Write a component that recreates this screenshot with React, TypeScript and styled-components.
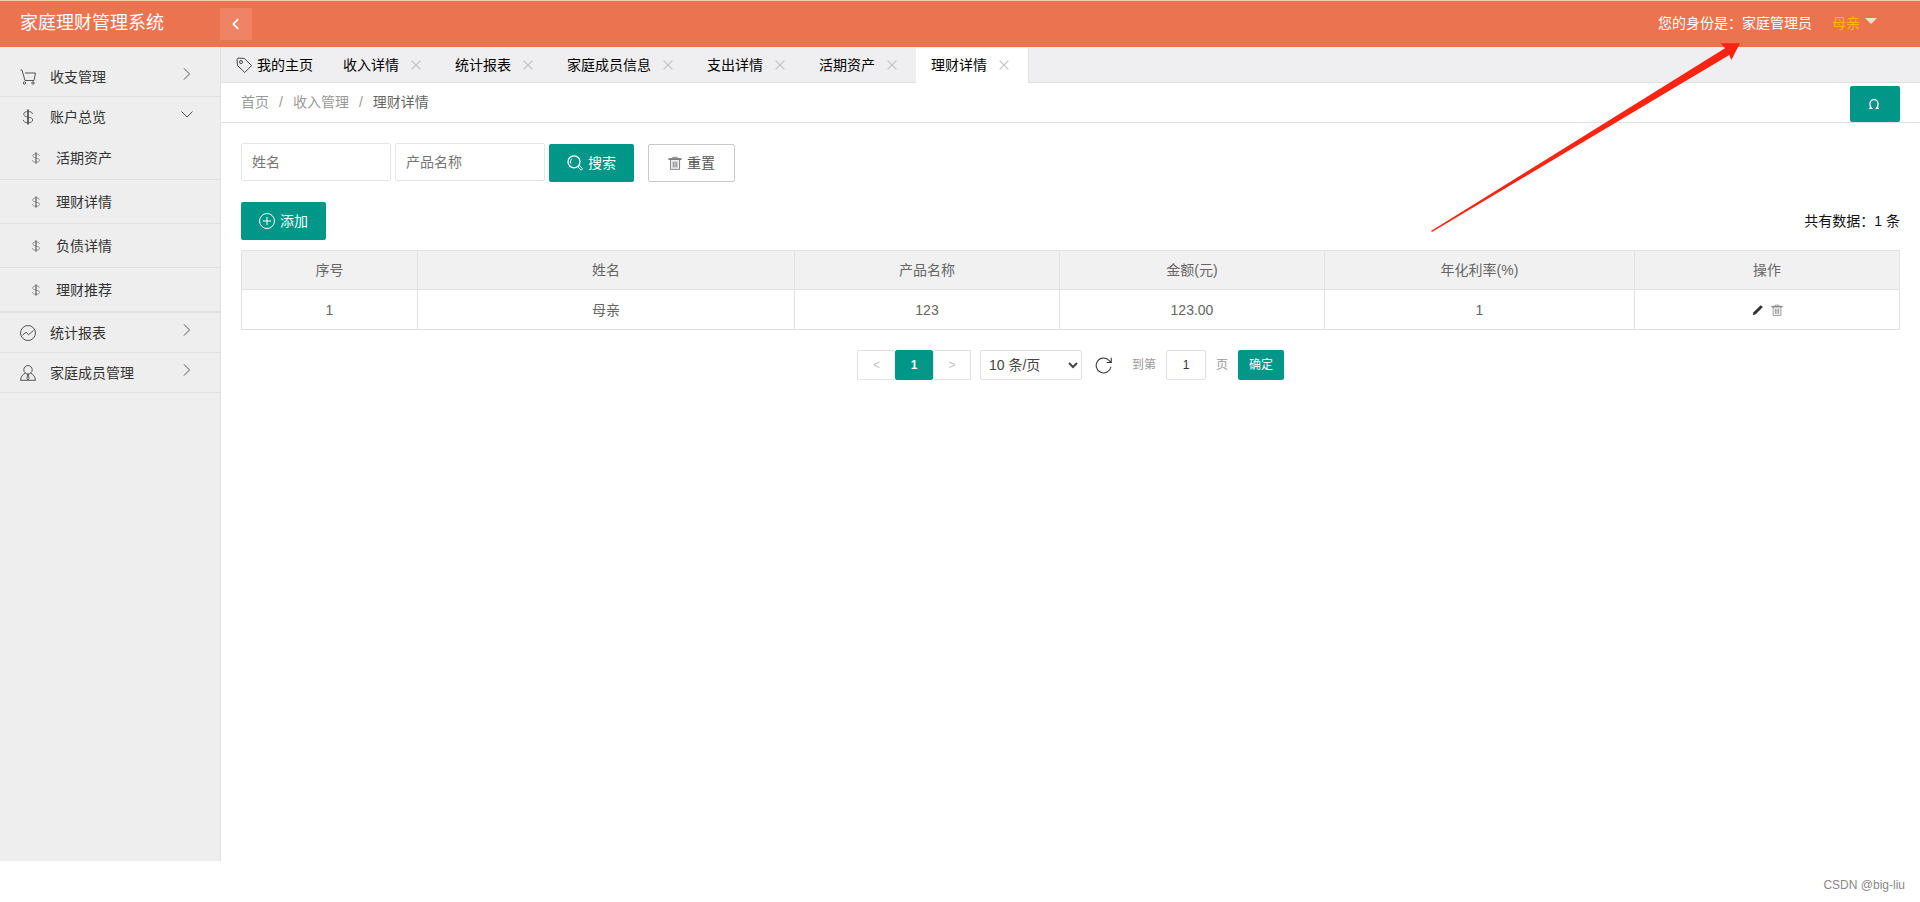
import React from 'react';
import styled, { createGlobalStyle, css } from 'styled-components';

const GlobalStyle = createGlobalStyle`
  * { box-sizing: border-box; }
  body {
    margin: 0;
    background: #fff;
    color: #333;
    font: 14px/24px "Liberation Sans", "Noto Sans CJK SC", sans-serif;
  }
  button, input, select { font-family: inherit; margin: 0; }
  ul, ol { list-style: none; margin: 0; padding: 0; }
  a { color: inherit; text-decoration: none; }
`;

const GREEN = '#009688';
const LINE = '#e2e2e2';

const Page = styled.div`
  position: relative;
  display: flex;
  flex-direction: column;
  min-height: 100vh;
`;

const Header = styled.header`
  display: flex;
  align-items: center;
  height: 47px;
  padding: 0 43px 0 20px;
  border-top: 1px solid #f3c9b4;
  background: #ec7350;
  color: #fff;
`;

const Brand = styled.h1`
  width: 200px;
  margin: 0;
  padding-bottom: 2px;
  font-size: 18px;
  line-height: 24px;
  font-weight: 400;
`;

const Collapse = styled.button`
  display: grid;
  place-items: center;
  width: 32px;
  height: 32px;
  padding: 0;
  border: 0;
  border-radius: 2px;
  background: rgba(255, 255, 255, 0.12);
  color: #fff;
`;

const Identity = styled.div`
  margin-left: auto;
  padding-bottom: 2px;
`;

const UserMenu = styled.button`
  display: flex;
  align-items: center;
  gap: 5px;
  margin-left: 20px;
  padding: 0 0 2px;
  border: 0;
  background: none;
  color: #ffb800;
  font-size: 14px;
  line-height: 24px;
`;

const Caret = styled.span`
  border: 6px solid transparent;
  border-top-color: #f8ddd2;
  border-bottom: 0;
  margin-bottom: 4px;
`;

const Body = styled.div`
  display: flex;
  flex: 1;
`;

const Sidebar = styled.nav`
  flex: none;
  width: 221px;
  padding-top: 10px;
  border-right: 1px solid ${LINE};
  background: #eee;
`;

const MenuGroup = styled.li`
  border-bottom: 1px solid #e0e0e0;
`;

const MenuLink = styled.a`
  display: flex;
  align-items: center;
  gap: 14px;
  height: 39px;
  padding: 0 25px 0 20px;
  svg { color: #555; }
`;

const MenuArrow = styled.span`
  display: flex;
  margin: 0 0 6px auto;
`;

const SubLink = styled.a`
  display: flex;
  align-items: center;
  gap: 14px;
  height: 44px;
  padding-left: 30px;
  border-bottom: 1px solid #e0e0e0;
  svg { color: #666; }
`;

const Main = styled.main`
  flex: 1;
  min-width: 0;
`;

const Tabs = styled.ul`
  display: flex;
  height: 36px;
  padding-top: 1px;
  border-bottom: 1px solid ${LINE};
  background: #efeef0;
  color: #000;
`;

const Tab = styled.li<{ $active?: boolean }>`
  display: flex;
  align-items: center;
  height: 35px;
  padding: 0 15px 2px;
  ${(p) => p.$active && css`background: #fff; border-right: 1px solid ${LINE};`}
  svg { margin-right: 5px; color: #444; }
`;

const TabClose = styled.button`
  display: grid;
  place-items: center;
  width: 18px;
  height: 18px;
  margin-left: 8px;
  padding: 0;
  border: 0;
  background: none;
  svg { margin: 0; color: #c2c2c2; }
`;

const CrumbBar = styled.div`
  display: flex;
  align-items: center;
  justify-content: space-between;
  height: 40px;
  padding: 0 20px;
  border-bottom: 1px solid ${LINE};
`;

const Crumbs = styled.ol`
  display: flex;
  padding-bottom: 2px;
  color: #999;
  li + li::before { content: '/'; margin: 0 10px; }
  li:last-child a { color: #666; }
`;

const Button = styled.button<{ $outline?: boolean }>`
  display: inline-flex;
  align-items: center;
  justify-content: center;
  gap: 5px;
  height: 38px;
  padding: 0 18px;
  border: 0;
  border-radius: 2px;
  background: ${GREEN};
  color: #fff;
  font-size: 14px;
  line-height: 24px;
  white-space: nowrap;
  ${(p) => p.$outline && css`
    margin-left: 10px;
    padding: 0 19px;
    border: 1px solid #c9c9c9;
    background: #fff;
    color: #555;
    svg { color: #777; }
  `}
`;

const Reload = styled(Button)`
  width: 50px;
  height: 36px;
  padding: 0 2px 0 0;
  align-self: flex-end;
`;

const Content = styled.div`
  padding: 20px;
`;

const SearchForm = styled.form`
  display: flex;
  align-items: flex-end;
  gap: 4px;
  height: 39px;
  margin-bottom: 20px;
`;

const Field = styled.input`
  align-self: flex-start;
  width: 150px;
  height: 38px;
  padding: 0 10px;
  border: 1px solid #e6e6e6;
  border-radius: 2px;
  font-size: 14px;
  &::placeholder { color: #757575; }
`;

const Toolbar = styled.div`
  display: flex;
  align-items: center;
  justify-content: space-between;
  margin-bottom: 10px;
  color: #111;
`;

const DataTable = styled.table`
  width: 100%;
  table-layout: fixed;
  border-collapse: collapse;
  color: #666;
  th, td {
    height: 40px;
    padding: 0 15px;
    border: 1px solid ${LINE};
    font-weight: 400;
    line-height: 20px;
    text-align: center;
  }
  th { height: 39px; background: #f1f1f1; }
`;

const Actions = styled.div`
  display: flex;
  justify-content: center;
  gap: 7px;
`;

const IconButton = styled.button<{ $muted?: boolean }>`
  display: flex;
  padding: 0;
  border: 0;
  background: none;
  color: ${(p) => (p.$muted ? '#888' : '#333')};
`;

const Pagination = styled.div`
  display: flex;
  justify-content: center;
  align-items: center;
  height: 30px;
  margin-top: 20px;
  color: #999;
  font-size: 12px;
`;

const PageButton = styled.button<{ $current?: boolean }>`
  width: 38px;
  height: 30px;
  padding: 0;
  border: 1px solid ${LINE};
  background: #fff;
  color: #c2c2c2;
  font-size: 12px;
  &:first-child { border-right: 0; border-radius: 2px 0 0 2px; }
  ${(p) => p.$current && css`
    border-color: ${GREEN};
    border-radius: 2px;
    background: ${GREEN};
    color: #fff;
    font-weight: 700;
  `}
`;

const PageSize = styled.select`
  width: 102px;
  height: 30px;
  margin: 0 13px 0 9px;
  padding: 0 4px;
  border: 1px solid ${LINE};
  border-radius: 2px;
  background: #fff;
  color: #444;
  font-size: 14px;
`;

const JumpLabel = styled.label`
  display: flex;
  align-items: center;
  gap: 10px;
  margin: 0 10px 0 20px;
`;

const JumpInput = styled.input`
  width: 40px;
  height: 30px;
  padding: 0;
  border: 1px solid ${LINE};
  border-radius: 2px;
  color: #333;
  font-size: 12px;
  text-align: center;
`;

const JumpButton = styled(Button)`
  width: 46px;
  height: 30px;
  padding: 0;
  font-size: 12px;
`;

const Footer = styled.footer`
  height: 41px;
  padding: 12px 15px 0 0;
  color: #888;
  font-size: 12px;
  text-align: right;
`;

const Pointer = styled.svg`
  position: absolute;
  top: 40px;
  right: 176px;
  pointer-events: none;
`;

const paths: Record<string, React.ReactNode> = {
  cart: <><path d="M.5 1h1.500l3 10.500H14l1.500-7.500H5" /><circle cx="4.500" cy="14" r="1.200" /><circle cx="13" cy="14" r="1.200" /></>,
  dollar: <path d="M8.500 .500v15M7.500 .500v15M12.500 5C12.300 3.200 10.500 2.500 8 2.500S3.700 3.500 3.700 5.200 5.300 7.500 8 8s4.700 1.200 4.700 3-2 2.700-4.700 2.700-4.600-.800-4.700-2.800" strokeWidth=".9" />,
  chart: <><circle cx="8" cy="8" r="7.500" /><path d="M2.500 10.200l3.500-3 2.700 2.600 4.800-4.500" /></>,
  user: <><circle cx="8" cy="4.800" r="4.200" /><path d="M5.300 8.200C2.500 9.500.8 12 .500 15.300h15C15.200 12 13.500 9.500 10.700 8.200M7 9.500h2M7.500 9.500 7 13.500l1 1.500 1-1.500-.500-4" /></>,
  right: <path d="M5 2.500 10.500 8 5 13.500" />,
  down: <path d="M2.500 5.500 8 11l5.500-5.500" />,
  left: <path d="M10.500 2.500 5 8l5.500 5.500" strokeWidth="2" />,
  tag: <><path d="M1 2.500 2 1l6.500.500 7 7.200-6.800 6.800L1.500 8.500z" /><circle cx="5" cy="5" r="1.500" /></>,
  close: <path d="m3 3 10 10m0-10-10 10" strokeWidth="1.500" />,
  search: <><circle cx="7" cy="6.800" r="6" strokeWidth="1.300" /><path d="m11.300 11.300 1-.800 3.200 3.200-1.300 1.500-3.100-3.200zM3.800 8.500C3 6.500 3.700 4.500 5.200 3.600" /></>,
  trash: <><path d="M2.800 4v11.300h10.400V4" fill="#ececec" /><path d="M5.500 3V1.500h5V3M6 6.500v6.500M8 6.500v6.500M10 6.500v6.500" /><path d="M.5 3.500h15" strokeWidth="2" /></>,
  plus: <><circle cx="8" cy="8" r="7.500" /><path d="M8 3.800v8.400M3.800 8h8.400" /></>,
  pencil: <path d="M1 15l1-4L11.500 1.500 14.500 4 5 13.500z" fill="currentColor" stroke="none" />,
  refresh: <path d="M15 9.200A7 7 0 1 1 13.500 3.500L15 5M15.300.800V5.200H11" />,
  loop: <path d="M1.500 13.800H4.700C3 12 2.500 10 2.500 8a5.500 6 0 0 1 11 0c0 2-.500 4-2.200 5.800h3.200" strokeWidth="1.700" />,
};

const Icon = ({ name, size = 16 }: { name: string; size?: number }) => (
  <svg width={size} height={size} viewBox="0 0 16 16" fill="none" stroke="currentColor" strokeWidth="1" aria-hidden="true">
    {paths[name]}
  </svg>
);

const menu = [
  { label: '收支管理', icon: 'cart' },
  { label: '账户总览', icon: 'dollar', children: ['活期资产', '理财详情', '负债详情', '理财推荐'] },
  { label: '统计报表', icon: 'chart' },
  { label: '家庭成员管理', icon: 'user' },
];

const tabs = ['收入详情', '统计报表', '家庭成员信息', '支出详情', '活期资产', '理财详情'];

const columns = [
  { title: '序号', share: 176 },
  { title: '姓名', share: 377 },
  { title: '产品名称', share: 265 },
  { title: '金额(元)', share: 265 },
  { title: '年化利率(%)', share: 310 },
  { title: '操作', share: 265 },
];
const totalShare = columns.reduce((sum, c) => sum + c.share, 0);

export default function App() {
  return (
    <>
      <GlobalStyle />
      <Page>
        <Header>
          <Brand>家庭理财管理系统</Brand>
          <Collapse aria-label="收起菜单"><Icon name="left" size={14} /></Collapse>
          <Identity>您的身份是：家庭管理员</Identity>
          <UserMenu>母亲<Caret /></UserMenu>
        </Header>

        <Body>
          <Sidebar>
            <ul>
              {menu.map((item) => (
                <MenuGroup key={item.label}>
                  <MenuLink href="#">
                    <Icon name={item.icon} />
                    {item.label}
                    <MenuArrow><Icon name={item.children ? 'down' : 'right'} /></MenuArrow>
                  </MenuLink>
                  {item.children && (
                    <ul>
                      {item.children.map((child) => (
                        <li key={child}>
                          <SubLink href="#"><Icon name="dollar" size={12} />{child}</SubLink>
                        </li>
                      ))}
                    </ul>
                  )}
                </MenuGroup>
              ))}
            </ul>
          </Sidebar>

          <Main>
            <Tabs>
              <Tab><Icon name="tag" />我的主页</Tab>
              {tabs.map((tab, i) => (
                <Tab key={tab} $active={i === tabs.length - 1}>
                  {tab}
                  <TabClose aria-label={`关闭${tab}`}><Icon name="close" size={14} /></TabClose>
                </Tab>
              ))}
            </Tabs>

            <CrumbBar>
              <Crumbs>
                <li><a href="#">首页</a></li>
                <li><a href="#">收入管理</a></li>
                <li><a href="#">理财详情</a></li>
              </Crumbs>
              <Reload aria-label="刷新"><Icon name="loop" size={12} /></Reload>
            </CrumbBar>

            <Content>
              <SearchForm onSubmit={(e) => e.preventDefault()}>
                <Field placeholder="姓名" aria-label="姓名" />
                <Field placeholder="产品名称" aria-label="产品名称" />
                <Button type="submit"><Icon name="search" />搜索</Button>
                <Button type="reset" $outline><Icon name="trash" size={14} />重置</Button>
              </SearchForm>

              <Toolbar>
                <Button><Icon name="plus" />添加</Button>
                <span>共有数据：1 条</span>
              </Toolbar>

              <DataTable>
                <colgroup>
                  {columns.map((c) => (
                    <col key={c.title} style={{ width: `${(c.share / totalShare) * 100}%` }} />
                  ))}
                </colgroup>
                <thead>
                  <tr>{columns.map((c) => <th key={c.title}>{c.title}</th>)}</tr>
                </thead>
                <tbody>
                  <tr>
                    <td>1</td>
                    <td>母亲</td>
                    <td>123</td>
                    <td>123.00</td>
                    <td>1</td>
                    <td>
                      <Actions>
                        <IconButton aria-label="编辑"><Icon name="pencil" size={12} /></IconButton>
                        <IconButton aria-label="删除" $muted><Icon name="trash" size={12} /></IconButton>
                      </Actions>
                    </td>
                  </tr>
                </tbody>
              </DataTable>

              <Pagination>
                <PageButton disabled aria-label="上一页">&lt;</PageButton>
                <PageButton $current>1</PageButton>
                <PageButton disabled aria-label="下一页">&gt;</PageButton>
                <PageSize aria-label="每页条数" defaultValue="10">
                  <option value="10">10 条/页</option>
                  <option value="20">20 条/页</option>
                </PageSize>
                <IconButton aria-label="刷新列表"><Icon name="refresh" size={17} /></IconButton>
                <JumpLabel>到第<JumpInput defaultValue="1" />页</JumpLabel>
                <JumpButton>确定</JumpButton>
              </Pagination>
            </Content>
          </Main>
        </Body>

        <Footer>CSDN @big-liu</Footer>

        <Pointer width="316" height="196" viewBox="0 0 316 196" aria-hidden="true">
          <path d="M3 191 297 8.300 292.700 3.300H312L303.300 20 301.300 15 4 192z" fill="#fb2412" />
        </Pointer>
      </Page>
    </>
  );
}
